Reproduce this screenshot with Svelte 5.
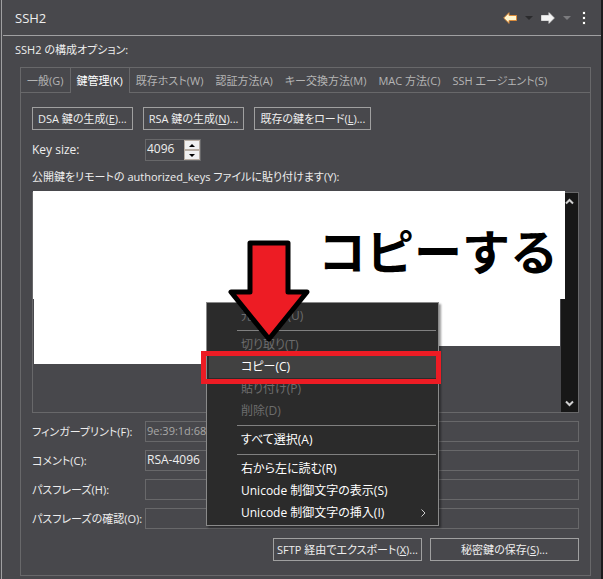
<script lang="ts">
  const tabs = [
    '一般(G)',
    '鍵管理(K)',
    '既存ホスト(W)',
    '認証方法(A)',
    'キー交換方法(M)',
    'MAC 方法(C)',
    'SSH エージェント(S)',
  ];
  let active = $state(1);

  let keySize = $state(4096);

  const generate = [
    { label: 'DSA 鍵の生成', key: 'E' },
    { label: 'RSA 鍵の生成', key: 'N' },
    { label: '既存の鍵をロード', key: 'L' },
  ];

  const exports = [
    { label: 'SFTP 経由でエクスポート', key: 'X' },
    { label: '秘密鍵の保存', key: 'S' },
  ];

  const fields = [
    { id: 'fingerprint', label: 'フィンガープリント(F):', value: '9e:39:1d:68:', readonly: true },
    { id: 'comment', label: 'コメント(C):', value: 'RSA-4096', readonly: false },
    { id: 'passphrase', label: 'パスフレーズ(H):', value: '', type: 'password' },
    { id: 'confirm', label: 'パスフレーズの確認(O):', value: '', type: 'password' },
  ];

  // null is a separator
  const menu = [
    { label: '元に戻す(U)', disabled: true },
    null,
    { label: '切り取り(T)', disabled: true },
    { label: 'コピー(C)', current: true },
    { label: '貼り付け(P)', disabled: true },
    { label: '削除(D)', disabled: true },
    null,
    { label: 'すべて選択(A)' },
    null,
    { label: '右から左に読む(R)' },
    { label: 'Unicode 制御文字の表示(S)' },
    { label: 'Unicode 制御文字の挿入(I)', submenu: true },
  ];
</script>

<div class="window">
  <header>
    <h1>SSH2</h1>
    <nav>
      <button class="icon" aria-label="戻る">
        <svg width="14" height="12" viewBox="0 0 14 12">
          <path d="M.7 6 6 .7V3.500H13.500V8.500H6V11.300Z" fill="#fff6cf" stroke="#d98a3a" stroke-linejoin="round" />
        </svg>
      </button>
      <button class="icon" aria-label="戻る履歴">
        <svg width="8" height="4" viewBox="0 0 8 4"><path d="M0 0H8L4 4Z" fill="#2b2b2d" /></svg>
      </button>
      <button class="icon" aria-label="進む">
        <svg width="14" height="12" viewBox="0 0 14 12">
          <path d="M13.300 6 8 .7V3.500H.5V8.500H8V11.300Z" fill="#f4f4f4" stroke="#d8d8d8" stroke-linejoin="round" />
        </svg>
      </button>
      <button class="icon" aria-label="進む履歴">
        <svg width="8" height="4" viewBox="0 0 8 4"><path d="M0 0H8L4 4Z" fill="#7b7b7e" /></svg>
      </button>
      <button class="icon" aria-label="メニュー">
        <svg width="10" height="14" viewBox="0 0 10 14">
          <g fill="#fff" stroke="#333" stroke-width="1">
            <circle cx="5" cy="2" r="1.900" /><circle cx="5" cy="7" r="1.900" /><circle cx="5" cy="12" r="1.900" />
          </g>
        </svg>
      </button>
    </nav>
  </header>

  <main>
    <p class="intro">SSH2 の構成オプション:</p>

    <section class="panel">
      <div class="tabs" role="tablist">
        {#each tabs as tab, i}
          <button role="tab" class:active={active === i} aria-selected={active === i} onclick={() => (active = i)}>
            {tab}
          </button>
        {/each}
      </div>

      <div class="content">
        <div class="generate">
          {#each generate as b}
            <button class="push">{b.label}(<u>{b.key}</u>)...</button>
          {/each}
        </div>

        <div class="size">
          <label for="keysize">Key size:</label>
          <div class="spinner">
            <input id="keysize" type="text" bind:value={keySize} />
            <div class="steps">
              <button aria-label="増やす" onclick={() => (keySize += 1)}>
                <svg width="6" height="3" viewBox="0 0 6 3"><path d="M0 3H6L3 0Z" /></svg>
              </button>
              <button aria-label="減らす" onclick={() => (keySize -= 1)}>
                <svg width="6" height="3" viewBox="0 0 6 3"><path d="M0 0H6L3 3Z" /></svg>
              </button>
            </div>
          </div>
        </div>

        <label class="keylabel" for="pubkey">公開鍵をリモートの authorized_keys ファイルに貼り付けます(Y):</label>
        <div class="keybox">
          <textarea id="pubkey" readonly></textarea>
          <div class="scroll">
            <svg width="9" height="7" viewBox="0 0 9 7"><path d="M1 5.500 4.500 2 8 5.500" /></svg>
            <svg width="9" height="7" viewBox="0 0 9 7"><path d="M1 1.500 4.500 5 8 1.500" /></svg>
          </div>
          <div class="mask top"></div>
          <div class="mask left"></div>
          <div class="mask right"></div>
          <strong class="callout">コピーする</strong>
        </div>

        <div class="fields">
          {#each fields as f}
            <label for={f.id}>{f.label}</label>
            <input id={f.id} type={f.type ?? 'text'} value={f.value} readonly={f.readonly} />
          {/each}
        </div>

        <div class="exports">
          {#each exports as b}
            <button class="push">{b.label}(<u>{b.key}</u>)...</button>
          {/each}
        </div>
      </div>
    </section>
  </main>

  <div class="menu" role="menu">
    {#each menu as item}
      {#if item}
        <button role="menuitem" disabled={item.disabled} class:current={item.current}>
          {item.label}
          {#if item.submenu}
            <svg width="5" height="8" viewBox="0 0 5 8"><path d="M.5 .5 4 4 .5 7.500" /></svg>
          {/if}
        </button>
      {:else}
        <hr />
      {/if}
    {/each}
    <div class="frame"></div>
    <svg class="arrow" width="82" height="104" viewBox="0 0 82 104">
      <path d="M22 4H60V53H79L41 100L3 53H22Z" />
    </svg>
  </div>
</div>

<style>
  :global(body) {
    background: #48484c;
  }

  .window {
    position: relative;
    box-sizing: border-box;
    min-height: 100vh;
    margin-left: 1px;
    border-left: 1px solid #a0a0a2;
    border-right: 2px solid #1c1c1e;
    background: #48484c;
    color: #eee;
    font: 11px/16px 'Open Sans', 'Noto Sans CJK JP', sans-serif;
    font-feature-settings: 'palt';
    white-space: nowrap;
  }

  button,
  input,
  textarea {
    box-sizing: border-box;
    margin: 0;
    padding: 0;
    border: 0;
    border-radius: 0;
    background: none;
    color: inherit;
    font: inherit;
    font-feature-settings: inherit;
  }

  header {
    display: flex;
    align-items: center;
    justify-content: space-between;
    height: 35px;
    margin-left: 1px;
    padding: 0 12px;
    border-bottom: 1px solid #a0a0a2;
  }

  h1 {
    margin: 0;
    font-size: 13px;
    font-weight: 400;
  }

  nav {
    display: flex;
    align-items: center;
    gap: 8px;
  }

  .icon {
    display: flex;
  }

  main {
    padding: 6px 10px 3px 18px;
  }

  .intro {
    margin: 0 0 9px -5px;
  }

  .panel {
    border: 1px solid #68686a;
  }

  .tabs {
    display: flex;
    height: 25px;
    box-shadow: inset 0 -1px #68686a;
  }

  .tabs button {
    padding: 0 6px;
    color: #b4b4b4;
  }

  .tabs .active {
    border: solid #68686a;
    border-width: 0 1px;
    background: #48484c;
    color: #fff;
  }

  .content {
    padding: 14px 11px;
  }

  .generate {
    display: flex;
    gap: 10px;
  }

  .push {
    height: 23px;
    padding: 0 5px;
    border: 1px solid #a0a0a0;
    line-height: 20px;
  }

  .size {
    display: grid;
    grid-template-columns: 113px 56px;
    align-items: center;
    margin: 9px 0 8px;
    font-size: 12px;
  }

  .spinner {
    display: flex;
    height: 22px;
    box-sizing: border-box;
    border: 1px solid #68686a;
  }

  .spinner input {
    flex: 1;
    min-width: 0;
    padding: 0 0 3px 1px;
  }

  .steps {
    display: grid;
    width: 16px;
    background: #f0f0f0;
  }

  .steps button {
    display: grid;
    place-items: center;
    border: 1px solid #b8aea4;
  }

  .keylabel {
    display: block;
    margin-bottom: 7px;
  }

  .keybox {
    position: relative;
    display: flex;
    height: 221px;
    box-sizing: border-box;
    border: 1px solid #68686a;
  }

  textarea {
    flex: 1;
    resize: none;
    outline: 0;
  }

  .scroll {
    display: flex;
    flex-direction: column;
    align-items: center;
    justify-content: space-between;
    width: 17px;
    padding: 5px 0;
    box-sizing: border-box;
    background: #171717;
  }

  .scroll path {
    fill: none;
    stroke: #d0d0d0;
    stroke-width: 2;
  }

  .mask {
    position: absolute;
    background: #fff;
  }

  .top {
    inset: -2px 13px auto 0;
    height: 108px;
  }

  .left {
    left: 1px;
    top: 106px;
    width: 180px;
    height: 65px;
  }

  .right {
    left: 180px;
    right: 18px;
    top: 106px;
    height: 47px;
  }

  .callout {
    position: absolute;
    top: 23px;
    right: 20px;
    color: #000;
    font-size: 48px;
    line-height: 72px;
    font-feature-settings: normal;
  }

  .fields {
    display: grid;
    grid-template-columns: 113px 1fr;
    row-gap: 8px;
    align-items: center;
    margin: 8px 0 9px;
  }

  .fields input {
    width: 100%;
    height: 21px;
    padding: 0 1px 2px;
    border: 1px solid #68686a;
    font-size: 12px;
  }

  .fields input:read-only {
    color: #a8a8a8;
    font-size: 11px;
  }

  .exports {
    display: flex;
    justify-content: flex-end;
    gap: 8px;
  }

  .exports .push {
    width: 149px;
    padding: 0;
  }

  .menu {
    position: absolute;
    left: 204px;
    top: 302px;
    width: 233px;
    box-sizing: border-box;
    padding: 2px 2px 1px;
    border: 1px solid #8a8a8a;
    background: #2b2b2b;
    box-shadow: 2px 2px 2px #0006;
    font-size: 12px;
  }

  .menu button {
    display: flex;
    align-items: center;
    justify-content: space-between;
    width: 100%;
    height: 22px;
    padding: 0 10px 0 32px;
    color: #fff;
  }

  .menu button:disabled {
    color: #6d6d6d;
  }

  .menu .current {
    background: #414141;
  }

  .menu button path {
    fill: none;
    stroke: #ccc;
  }

  hr {
    height: 1px;
    margin: 3px 0 3px 28px;
    border: 0;
    background: #808080;
  }

  .frame {
    position: absolute;
    top: 48px;
    left: -6px;
    right: -3px;
    height: 33px;
    box-sizing: border-box;
    border: 5px solid #ed1c24;
  }

  .arrow {
    position: absolute;
    left: 21px;
    top: -64px;
  }

  .arrow path {
    fill: #ed1c24;
    stroke: #000;
    stroke-width: 5;
    stroke-linejoin: round;
  }
</style>
